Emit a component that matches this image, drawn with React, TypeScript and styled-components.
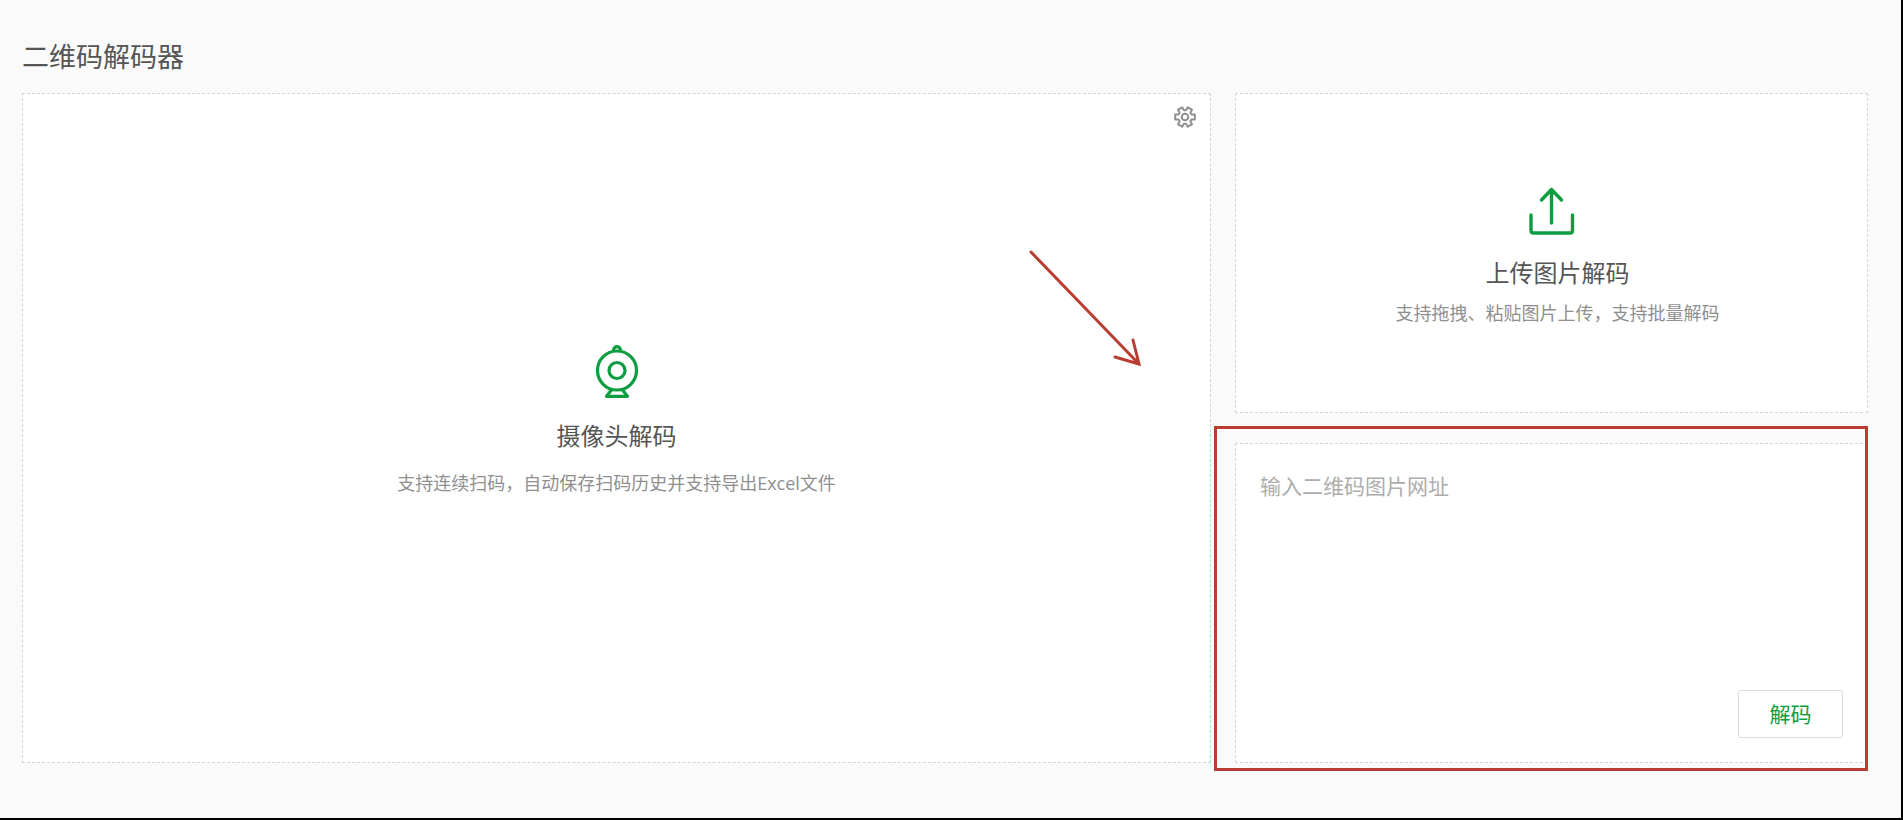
import React from "react";
import styled, { createGlobalStyle } from "styled-components";

const GREEN = "#0c9d40";
const RED = "#b93d32";

const GlobalStyle = createGlobalStyle`
  *, *::before, *::after { box-sizing: border-box; }
  body { margin: 0; }
  body, button, textarea {
    font-family: "Open Sans", "Noto Sans CJK SC", sans-serif;
    font-weight: 400;
  }
`;

const Page = styled.main`
  min-height: 100vh;
  padding: 37px 33px 54px 22px;
  background: #fafafa;
  border-right: 2px solid #000;
  border-bottom: 2px solid #000;
`;

const Title = styled.h1`
  margin: 0 0 16px;
  font-size: 27px;
  line-height: 40px;
  font-weight: 400;
  color: #555;
`;

const Board = styled.div`
  display: grid;
  grid-template-columns: minmax(0, 1189fr) minmax(0, 633fr);
  column-gap: 24px;
`;

const SideColumn = styled.div`
  display: grid;
  row-gap: 30px;
`;

const Card = styled.section`
  position: relative;
  display: flex;
  min-height: 320px;
  background: #fff;
  border: 1px dashed #d4d4d4;
`;

const Action = styled.button<{ $top?: number; $bottom?: number }>`
  flex: 1;
  display: flex;
  flex-direction: column;
  align-items: center;
  justify-content: center;
  padding: ${(p) => p.$top ?? 0}px 0 ${(p) => p.$bottom ?? 0}px;
  border: 0;
  background: transparent;
  cursor: pointer;
`;

const Caption = styled.span<{ $gap: number; $indent?: number }>`
  display: flex;
  flex-direction: column;
  align-items: center;
  gap: ${(p) => p.$gap}px;
  margin-top: 20px;
  padding-left: ${(p) => p.$indent ?? 0}px;
`;

const Heading = styled.span`
  font-size: 24px;
  line-height: 36px;
  color: #555;
`;

const Description = styled.span`
  font-size: 18px;
  line-height: 28px;
  color: #8f8f8f;
`;

const SettingsButton = styled.button`
  position: absolute;
  top: 11px;
  right: 13px;
  display: flex;
  padding: 0;
  border: 0;
  background: transparent;
  color: #8f8f8f;
  cursor: pointer;
`;

const Arrow = styled.svg`
  position: absolute;
  top: 152px;
  right: 66px;
  pointer-events: none;
`;

const UrlForm = styled.form`
  flex: 1;
  display: flex;
  flex-direction: column;
  align-items: flex-end;
  padding: 24px;
`;

const UrlInput = styled.textarea`
  flex: 1;
  width: 100%;
  padding: 2px 0;
  border: 0;
  outline: 0;
  resize: none;
  background: transparent;
  font-size: 21px;
  line-height: 32px;
  color: #555;

  &::placeholder {
    color: #adadad;
    opacity: 1;
  }
`;

const DecodeButton = styled.button`
  width: 105px;
  height: 48px;
  padding: 0;
  border: 1px solid #d9dcdc;
  border-radius: 3px;
  background: #fff;
  font-size: 21px;
  line-height: 32px;
  color: ${GREEN};
  cursor: pointer;
`;

const Highlight = styled.div`
  position: absolute;
  inset: -18px -1px -9px -22px;
  border: 3px solid ${RED};
  pointer-events: none;
`;

const CameraIcon = () => (
  <svg width="44" height="54" viewBox="0 0 44 54" fill="none" stroke={GREEN} strokeWidth="3.2" strokeLinejoin="round" aria-hidden="true">
    <circle cx="22" cy="26.5" r="19.5" />
    <circle cx="22" cy="26.5" r="8" />
    <path d="M18.6 7.500v-1.500a3.400 3.400 0 0 1 6.800 0V7.500" />
    <path d="M16.5 46 11.500 52.300h21l-5-6.300" />
  </svg>
);

const UploadIcon = () => (
  <svg width="46" height="48" viewBox="0 0 46 48" fill="none" stroke={GREEN} strokeWidth="3.4" strokeLinecap="round" strokeLinejoin="round" aria-hidden="true">
    <path d="M22.5 36V2.500M12.500 13 22.500 2.500 32.500 13" />
    <path d="M2 28v15.500Q2 46 4.500 46h36.500Q43.500 46 43.500 43.500V28" />
  </svg>
);

const GearIcon = () => {
  const tooth: [number, number][] = [[6.4, -2.5], [9.800, -2.4], [9.800, 2.4], [6.4, 2.5]];
  const points = [0, 60, 120, 180, 240, 300].flatMap((deg) => {
    const a = (deg * Math.PI) / 180;
    return tooth.map(([r, t]) =>
      `${(12 + r * Math.cos(a) - t * Math.sin(a)).toFixed(2)},${(12 + r * Math.sin(a) + t * Math.cos(a)).toFixed(2)}`
    );
  });
  return (
    <svg width="24" height="24" viewBox="0 0 24 24" fill="none" stroke="currentColor" strokeWidth="2" strokeLinejoin="round" aria-hidden="true">
      <polygon points={points.join(" ")} />
      <circle cx="12" cy="12" r="3.3" />
    </svg>
  );
};

export default function App() {
  return (
    <>
      <GlobalStyle />
      <Page>
        <Title>二维码解码器</Title>
        <Board>
          <Card>
            <Action type="button" $bottom={16}>
              <CameraIcon />
              <Caption $gap={15}>
                <Heading>摄像头解码</Heading>
                <Description>支持连续扫码，自动保存扫码历史并支持导出Excel文件</Description>
              </Caption>
            </Action>
            <SettingsButton type="button" aria-label="设置">
              <GearIcon />
            </SettingsButton>
            <Arrow width="120" height="124" viewBox="0 0 120 124" fill="none" stroke={RED} strokeWidth="3" strokeLinecap="round" aria-hidden="true">
              <path d="M7 6 115 118M109 94 115 118 91 111" />
            </Arrow>
          </Card>
          <SideColumn>
            <Card>
              <Action type="button" $top={8}>
                <UploadIcon />
                <Caption $gap={8} $indent={12}>
                  <Heading>上传图片解码</Heading>
                  <Description>支持拖拽、粘贴图片上传，支持批量解码</Description>
                </Caption>
              </Action>
            </Card>
            <Card>
              <UrlForm onSubmit={(e) => e.preventDefault()}>
                <UrlInput aria-label="二维码图片网址" placeholder="输入二维码图片网址" />
                <DecodeButton type="submit">解码</DecodeButton>
              </UrlForm>
              <Highlight />
            </Card>
          </SideColumn>
        </Board>
      </Page>
    </>
  );
}
